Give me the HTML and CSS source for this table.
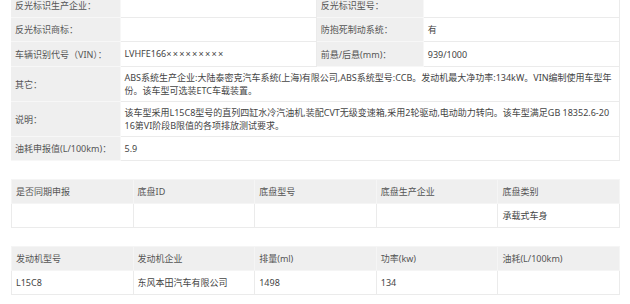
FILE: index.html
```html
<!DOCTYPE html>
<html lang="zh-CN">
<head>
<meta charset="utf-8">
<title>车型参数</title>
<link rel="stylesheet" href="styles.css">
</head>
<body>
<div class="page">
  <table class="info">
    <colgroup>
      <col class="c-label"><col class="c-value"><col class="c-label2"><col class="c-value">
    </colgroup>
    <tbody>
      <tr>
        <th>反光标识生产企业：</th><td></td>
        <th>反光标识型号：</th><td></td>
      </tr>
      <tr>
        <th>反光标识商标：</th><td></td>
        <th>防抱死制动系统：</th><td>有</td>
      </tr>
      <tr>
        <th>车辆识别代号（VIN）：</th><td>LVHFE166<span class="mask">×××××××××</span></td>
        <th>前悬/后悬(mm)：</th><td>939/1000</td>
      </tr>
      <tr class="tall">
        <th>其它：</th>
        <td colspan="3">ABS系统生产企业:大陆泰密克汽车系统(上海)有限公司,ABS系统型号:CCB。发动机最大净功率:134kW。VIN编制使用车型年份。该车型可选装ETC车载装置。</td>
      </tr>
      <tr class="tall">
        <th>说明：</th>
        <td colspan="3">该车型采用L15C8型号的直列四缸水冷汽油机,装配CVT无级变速箱,采用2轮驱动,电动助力转向。该车型满足GB 18352.6-20<br>16第VI阶段B限值的各项排放测试要求。</td>
      </tr>
      <tr>
        <th>油耗申报值(L/100km)：</th>
        <td colspan="3">5.9</td>
      </tr>
    </tbody>
  </table>

  <table class="grid">
    <thead>
      <tr><th>是否同期申报</th><th>底盘ID</th><th>底盘型号</th><th>底盘生产企业</th><th>底盘类别</th></tr>
    </thead>
    <tbody>
      <tr><td></td><td></td><td></td><td></td><td>承载式车身</td></tr>
    </tbody>
  </table>

  <table class="grid">
    <thead>
      <tr><th>发动机型号</th><th>发动机企业</th><th>排量(ml)</th><th>功率(kw)</th><th>油耗(L/100km)</th></tr>
    </thead>
    <tbody>
      <tr><td>L15C8</td><td>东风本田汽车有限公司</td><td>1498</td><td>134</td><td></td></tr>
    </tbody>
  </table>
</div>
</body>
</html>
```

FILE: styles.css
```css
html, body {
  margin: 0;
  padding: 0;
  background: #ffffff;
}

body {
  font-family: "Noto Sans", "Noto Sans CJK SC", sans-serif;
  font-size: 9px;
  color: #444444;
}

.page {
  width: 609px;
  margin: -7px 0 0 11px;
  display: flex;
  flex-direction: column;
  gap: 18px;
}

table {
  width: 100%;
  border-collapse: collapse;
  table-layout: fixed;
}

th, td {
  font-weight: normal;
  text-align: left;
  vertical-align: middle;
  line-height: 13px;
  height: 13px;
  padding: 5px 4px;
  border: 1px solid #ebebeb;
}

.info .c-label { width: 109px; }
.info .c-label2 { width: 107px; }

.info th {
  background: #efefef;
  color: #555555;
  border-color: #f7f7f7;
  border-left: none;
  white-space: nowrap;
}

.info td {
  color: #444444;
  word-break: break-all;
}

.info .tall th,
.info .tall td {
  padding-top: 4px;
  padding-bottom: 4px;
}

.mask {
  font-family: "Liberation Sans", sans-serif;
  letter-spacing: 1.2px;
}

.grid thead th {
  background: #efefef;
  color: #555555;
  border-color: #f5f5f5;
}

.grid td {
  color: #444444;
}
```
